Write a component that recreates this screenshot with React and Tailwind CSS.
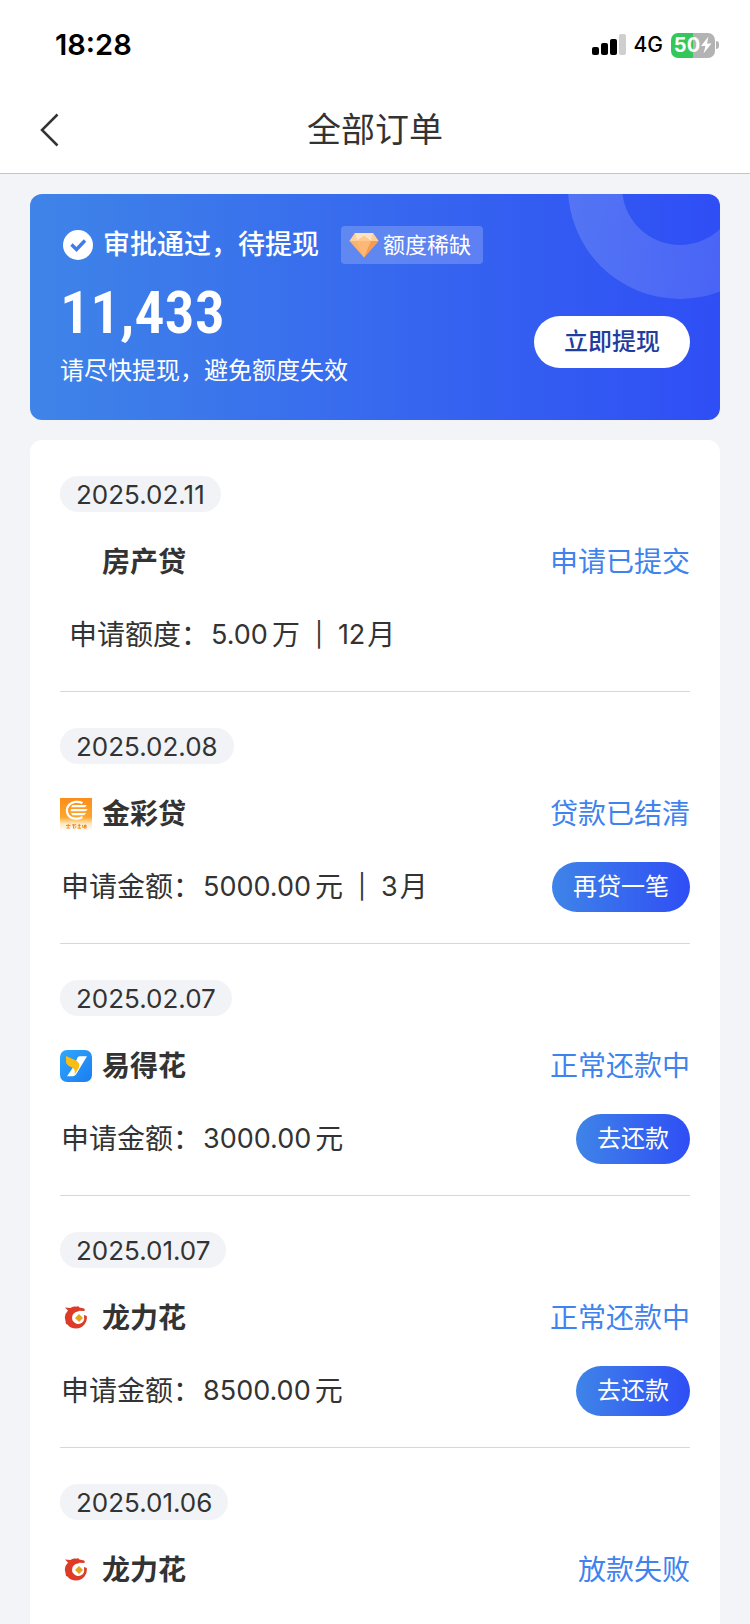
import { useId } from "react";

function GoldLogo() {
  const id = useId();
  return (
    <svg viewBox="0 0 32 32" className="h-8 w-8" aria-hidden="true">
      <defs>
        <linearGradient id={id} x1="0" y1="0" x2="0" y2="1">
          <stop offset="0" stopColor="#fb8d1a" />
          <stop offset="0.6" stopColor="#fea62c" />
          <stop offset="0.8" stopColor="#ffe7bd" />
          <stop offset="1" stopColor="#fffdf8" />
        </linearGradient>
      </defs>
      <rect width="32" height="32" fill={`url(#${id})`} />
      <path d="M22.500 5C18 3 12 3.500 9 7C5.500 11 6.500 17 11 19.500C14.500 21.300 19.500 21 22.500 18.800" fill="none" stroke="#fff" strokeWidth="2.200" />
      <path d="M12.500 7H26.500C26.300 8.500 25.500 9.300 24 9.300H11ZM11 11H27.500C27 12.800 26 13.300 24.500 13.300H10.500ZM11 15H26C25.300 16.800 24 17.300 22.500 17.300H12.500Z" fill="#fff" />
      <path d="M6 27.500H10.500M8.200 26V29.500M6.500 30H10M12 27H15M13.500 26V30.500M16 26L14.800 27.500M16.300 28L14.500 30.500M17.800 27.500H20.500M19.200 26V30M17.500 30.200H21M22.500 27L23 30M24 27.500H26.500M25.200 26.500V28.500M24 30H26.200V28.500H24Z" stroke="#f58a1f" strokeWidth="1" fill="none" />
    </svg>
  );
}

function YLogo() {
  const id = useId();
  return (
    <svg viewBox="0 0 32 32" className="h-8 w-8" aria-hidden="true">
      <defs>
        <linearGradient id={id} x1="0" y1="0" x2="1" y2="1">
          <stop offset="0" stopColor="#2fa8fb" />
          <stop offset="1" stopColor="#1c7cf2" />
        </linearGradient>
      </defs>
      <rect width="32" height="32" rx="7" fill={`url(#${id})`} />
      <path d="M17.500 7.500Q18.500 6.300 20 6.300H27L16 24.500Q14.800 26.300 12.800 26.300H7L14 16Z" fill="#fff" />
      <path d="M6 6L15 10Q20.800 12.500 19 17.500L14.500 25Q16 19.500 12 17.500L9 16Q6 14.500 6 12Z" fill="#fcbd13" />
    </svg>
  );
}

function DragonLogo() {
  return (
    <svg viewBox="0 0 32 32" className="h-8 w-8" aria-hidden="true">
      <path d="M5 5.500L10.500 6C13 4.500 15.500 4.300 17 4.800L18 4L19.500 5.500L24 6.500L25 8L24 9L19.500 8.700L18 9.600A6.200 6.200 0 1 0 24.200 17.500L24 13L26.800 14C27.500 20.500 23 26.600 16 26.600C12.500 26.600 9 25 7.500 22.500L6 22L5.500 19L4.800 15.500L5.500 12L8 8.500Z" fill="#dd3a27" />
      <path d="M19 12L23 16L19 20L15 16Z" fill="#e5a41d" />
    </svg>
  );
}

const orders = [
  { date: "2025.02.11", name: "房产贷", status: "申请已提交", label: "申请额度：", value: "5.00", unit: "万", months: "12", inset: true },
  { date: "2025.02.08", name: "金彩贷", Logo: GoldLogo, status: "贷款已结清", label: "申请金额：", value: "5000.00", unit: "元", months: "3", action: "再贷一笔" },
  { date: "2025.02.07", name: "易得花", Logo: YLogo, status: "正常还款中", label: "申请金额：", value: "3000.00", unit: "元", action: "去还款" },
  { date: "2025.01.07", name: "龙力花", Logo: DragonLogo, status: "正常还款中", label: "申请金额：", value: "8500.00", unit: "元", action: "去还款" },
  { date: "2025.01.06", name: "龙力花", Logo: DragonLogo, status: "放款失败" },
];

function StatusBar() {
  return (
    <div className="flex h-[90px] items-center justify-between pl-[55px] pr-[31px] text-black">
      <span className="text-[29px] font-semibold leading-9">18:28</span>
      <div className="flex items-center gap-2">
        <svg viewBox="0 0 34 22" className="h-[22px] w-[34px]" aria-hidden="true">
          <rect x="0" y="13" width="7" height="8" rx="2" />
          <rect x="9" y="9" width="7" height="12" rx="2" />
          <rect x="18" y="5" width="7" height="16" rx="2" />
          <rect x="27" y="0" width="7" height="21" rx="2" fill="#cfcfcf" />
        </svg>
        <span className="text-[21px] font-medium leading-6">4G</span>
        <div className="flex items-center gap-px">
          <div className="flex h-[25px] w-11 items-center justify-center rounded-[7px] bg-linear-to-r from-[#34c759] from-50% to-[#b3b3b3] to-50% text-[20px] font-bold leading-6 text-white">
            50
            <svg viewBox="0 0 12 18" className="h-[18px] w-3" aria-hidden="true">
              <path d="M8.500 0.500L1 10H5.500L3.500 17.500L11.500 7.500H7Z" fill="#fff" />
            </svg>
          </div>
          <div className="h-2 w-[3px] rounded-r-full bg-[#b3b3b3]" />
        </div>
      </div>
    </div>
  );
}

function QuotaCard() {
  return (
    <section className="relative flex h-[226px] items-end justify-between overflow-hidden rounded-xl bg-linear-to-r/srgb from-[#3f84e8] to-[#2f4ef5] px-[30px] text-white">
      <svg viewBox="0 0 152 105" className="absolute right-0 top-0 h-[105px] w-[152px]" aria-hidden="true">
        <defs>
          <linearGradient id="ring" x1="0" y1="0" x2="1" y2="0.300">
            <stop offset="0" stopColor="#fff" stopOpacity="0.170" />
            <stop offset="1" stopColor="#fff" stopOpacity="0.120" />
          </linearGradient>
        </defs>
        <path fillRule="evenodd" fill="url(#ring)" d="M0 -7a112 112 0 1 0 224 0a112 112 0 1 0 -224 0ZM54 -7a58 58 0 1 0 116 0a58 58 0 1 0 -116 0Z" />
      </svg>
      <div className="flex flex-col self-start pt-8">
        <div className="flex h-[38px] items-center">
          <svg viewBox="0 0 30 30" className="ml-[3px] h-[30px] w-[30px]" aria-hidden="true">
            <circle cx="15" cy="15" r="15" fill="#fff" />
            <path d="M8.500 14.500L13.500 19.500L22 10.500" fill="none" stroke="#3f7ce9" strokeWidth="3.400" />
          </svg>
          <h2 className="ml-[10px] text-[27px] font-medium leading-[38px]">审批通过，待提现</h2>
          <span className="ml-[22px] flex h-[38px] items-center rounded bg-white/20 pl-2 pr-3 text-[22px] leading-8">
            <svg viewBox="0 0 30 26" className="mr-1 h-[26px] w-[30px]" aria-hidden="true">
              <path d="M6 1H24L29.500 9L15 25.500L0.500 9Z" fill="#fbb36c" />
              <path d="M6 1L8 9H0.500ZM24 1L22 9H29.500Z" fill="#fdcf9b" />
              <path d="M6 1H24L22 9L15 4L8 9Z" fill="#fee3c3" />
              <path d="M8 9L15 4L22 9Z" fill="#fdc98f" />
              <path d="M8 9H22L15 25.500Z" fill="#fdb878" />
              <path d="M22 9H29.500L15 25.500Z" fill="#f99b4d" />
            </svg>
            额度稀缺
          </span>
        </div>
        <strong className="mt-4 font-['Roboto_Condensed','Roboto',sans-serif] text-[60px] font-semibold leading-[66px]">11,433</strong>
        <p className="mt-[7px] text-[24px] leading-9">请尽快提现，避免额度失效</p>
      </div>
      <button type="button" className="relative mb-[52px] h-[52px] w-[156px] rounded-full bg-white text-[24px] font-medium text-[#1f3da0]">
        立即提现
      </button>
    </section>
  );
}

function Order({ date, name, Logo, status, label, value, unit, months, action, inset }) {
  return (
    <li className="min-h-[252px] border-b border-[#d8d8d8] pb-[31px] pt-9">
      <time className="flex h-9 w-fit items-center rounded-full bg-[#f2f3f7] px-4 text-[26px]">{date}</time>
      <div className="mt-[30px] flex h-10 items-center text-[28px]">
        <span className="mr-[10px] h-8 w-8">{Logo && <Logo />}</span>
        <h3 className="font-bold">{name}</h3>
        <span className="ml-auto text-[#3f83ee]">{status}</span>
      </div>
      {label && (
        <div className={`mt-7 flex h-[50px] items-center justify-between text-[28px] ${inset ? "pl-2" : ""}`}>
          <p className="flex items-center pl-px">
            <span>{label}</span>
            <span className="ml-0.5 text-[27px]">{value}</span>
            <span className="ml-1">{unit}</span>
            {months && (
              <>
                <span className="mx-[15px] text-[24px]">|</span>
                <span className="text-[27px]">{months}</span>
                <span className="ml-0.5">月</span>
              </>
            )}
          </p>
          {action && (
            <button type="button" className="h-[50px] rounded-full bg-linear-to-r/srgb from-[#3f84e8] to-[#2f4ef5] px-[21px] text-[24px] text-white">
              {action}
            </button>
          )}
        </div>
      )}
    </li>
  );
}

export default function App() {
  return (
    <div className="h-screen overflow-hidden bg-[#f2f4f8] font-['Inter','Noto_Sans_CJK_SC',sans-serif] text-[#333333]">
      <header className="border-b border-[#c4c4ca] bg-white">
        <StatusBar />
        <div className="grid h-[83px] grid-cols-[1fr_auto_1fr] items-center pb-1">
          <button type="button" aria-label="返回" className="ml-9 flex h-12 w-12 items-center">
            <svg viewBox="0 0 28 36" className="h-9 w-7" fill="none" stroke="#333" strokeWidth="2.500" aria-hidden="true">
              <path d="M21.500 2.500L6 18L21.500 33.500" />
            </svg>
          </button>
          <h1 className="text-[34px]">全部订单</h1>
        </div>
      </header>
      <main className="flex flex-col gap-5 px-[30px] pt-5">
        <QuotaCard />
        <ul className="rounded-xl bg-white px-[30px]">
          {orders.map((order) => (
            <Order key={order.date} {...order} />
          ))}
        </ul>
      </main>
    </div>
  );
}
